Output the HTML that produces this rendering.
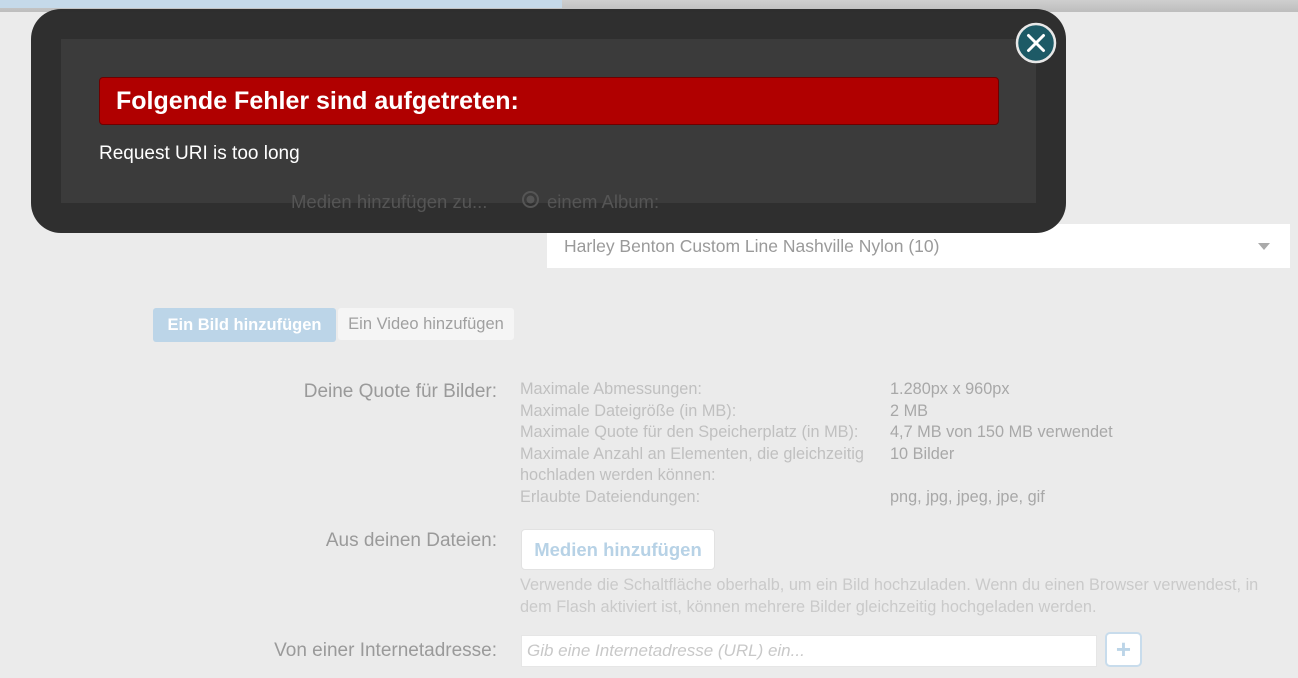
<!DOCTYPE html>
<html><head><meta charset="utf-8"><style>
*{margin:0;padding:0;box-sizing:border-box}
body{width:1298px;height:678px;overflow:hidden;background:#ebebeb;font-family:"Liberation Sans",sans-serif;position:relative}
.top{position:absolute;left:0;top:0;width:1298px;height:12px;background:linear-gradient(#cfcfcf,#bdbdbd)}
.top .b{position:absolute;left:0;top:0;width:562px;height:8px;background:#c5d9e9}
.abs{position:absolute;white-space:nowrap}
.lbl{color:#9a9a9a;font-size:19px;text-align:right;width:360px}
.sm{color:#c0c0c0;font-size:16.3px;line-height:21.5px}
.val{color:#a8a8a8;font-size:16.3px;line-height:21.5px}
</style></head><body>
<div class="top"><div class="b"></div></div>

<div class="abs" style="left:547px;top:224px;width:743px;height:44px;background:#fff"></div>
<div class="abs" style="left:564px;top:236px;color:#9a9a9a;font-size:17.5px">Harley Benton Custom Line Nashville Nylon (10)</div>
<div class="abs" style="left:1258px;top:243px;width:0;height:0;border-left:6px solid transparent;border-right:6px solid transparent;border-top:7px solid #aaa"></div>

<div class="abs" style="left:153px;top:308px;width:183px;height:34px;background:#bcd5e8;border-radius:3px;color:#fff;font-weight:bold;font-size:16.5px;line-height:34px;text-align:center">Ein Bild hinzufügen</div>
<div class="abs" style="left:338px;top:308px;width:176px;height:32px;background:#f5f5f5;border-radius:3px;color:#a0a0a0;font-size:16.5px;line-height:32px;text-align:center">Ein Video hinzufügen</div>

<div class="abs lbl" style="left:137px;top:381px">Deine Quote für Bilder:</div>
<div class="abs sm" style="left:520px;top:379px">Maximale Abmessungen:<br>Maximale Dateigröße (in MB):<br>Maximale Quote für den Speicherplatz (in MB):<br>Maximale Anzahl an Elementen, die gleichzeitig<br>hochladen werden können:<br>Erlaubte Dateiendungen:</div>
<div class="abs val" style="left:890px;top:379px">1.280px x 960px<br>2 MB<br>4,7 MB von 150 MB verwendet<br>10 Bilder<br>&nbsp;<br>png, jpg, jpeg, jpe, gif</div>

<div class="abs lbl" style="left:137px;top:530px">Aus deinen Dateien:</div>
<div class="abs" style="left:521px;top:529px;width:194px;height:41px;background:#fff;border-radius:4px;border:1px solid #e2e2e2;color:#b7d2e6;font-weight:bold;font-size:18.5px;line-height:39px;text-align:center">Medien hinzufügen</div>
<div class="abs sm" style="left:520px;top:575px;color:#cacaca">Verwende die Schaltfläche oberhalb, um ein Bild hochzuladen. Wenn du einen Browser verwendest, in<br>dem Flash aktiviert ist, können mehrere Bilder gleichzeitig hochgeladen werden.</div>

<div class="abs lbl" style="left:137px;top:640px">Von einer Internetadresse:</div>
<div class="abs" style="left:521px;top:635px;width:576px;height:32px;background:#fff;border:1px solid #e6e6e6"></div>
<div class="abs" style="left:527px;top:641px;color:#c8c8c8;font-size:17px;font-style:italic">Gib eine Internetadresse (URL) ein...</div>
<div class="abs" style="left:1105px;top:632px;width:37px;height:35px;background:#fff;border:2px solid #c8dcec;border-radius:5px;color:#bcd5e8;font-size:26px;font-weight:bold;line-height:30px;text-align:center">+</div>

<div class="abs" style="left:31px;top:9px;width:1035px;height:224px;background:#2b2b2b;border-radius:30px;opacity:.98"></div>
<div class="abs" style="left:61px;top:39px;width:975px;height:164px;background:#3b3b3b"></div>
<div class="abs" style="left:291px;top:191px;color:#555;font-size:18.5px">Medien hinzufügen zu...</div>
<div class="abs" style="left:522px;top:191px;width:17px;height:17px;border-radius:50%;border:2px solid #555;background:radial-gradient(#555 40%,transparent 45%)"></div>
<div class="abs" style="left:547px;top:191px;color:#555;font-size:18.5px">einem Album:</div>
<div class="abs" style="left:99px;top:77px;width:900px;height:48px;background:#b00000;border:1px solid #6e0000;border-radius:4px"></div>
<div class="abs" style="left:116px;top:87px;color:#fff;font-size:25px;font-weight:bold">Folgende Fehler sind aufgetreten:</div>
<div class="abs" style="left:99px;top:143px;color:#fff;font-size:19px">Request URI is too long</div>
<svg class="abs" style="left:1015px;top:22px" width="42" height="42" viewBox="0 0 42 42"><circle cx="21" cy="21" r="19" fill="#1d5a66" stroke="#e8e8e8" stroke-width="2.5"/><path d="M13.5 13.5L28.5 28.5M28.5 13.5L13.5 28.5" stroke="#fff" stroke-width="3" stroke-linecap="round"/></svg>
</body></html>
